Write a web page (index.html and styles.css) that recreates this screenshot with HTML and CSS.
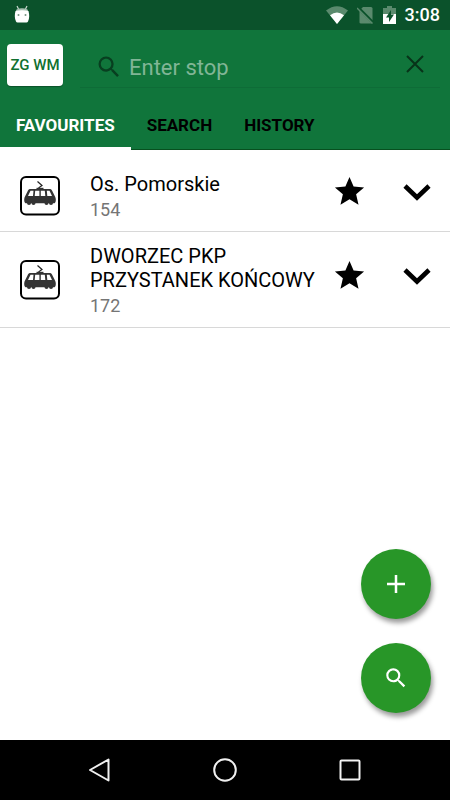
FILE: index.html
```html
<!DOCTYPE html>
<html lang="en">
<head>
    <meta charset="UTF-8">
    <meta name="viewport" content="width=device-width, initial-scale=1.0">
    <title>Stops</title>
    <link rel="stylesheet" href="styles.css">
</head>
<body>
    <!-- Shared icons -->
    <svg class="defs" width="0" height="0" aria-hidden="true">
        <symbol id="icon-search" viewBox="0 0 24 24">
            <path d="M15.5 14h-.79l-.28-.27A6.47 6.47 0 0 0 16 9.5 6.5 6.5 0 1 0 9.5 16c1.61 0 3.09-.59 4.23-1.57l.27.28v.79l5 4.99L20.49 19l-4.99-5zm-6 0C7.01 14 5 11.99 5 9.5S7.01 5 9.5 5 14 7.01 14 9.5 11.99 14 9.5 14z"/>
        </symbol>
        <symbol id="icon-star" viewBox="0 0 24 24">
            <path d="M12 17.27L18.18 21l-1.64-7.03L22 9.24l-7.19-.61L12 2 9.19 8.63 2 9.24l5.46 4.73L5.82 21z"/>
        </symbol>
        <symbol id="icon-chevron" viewBox="0 0 28 22">
            <path d="M2 6L14 17.5L26 6" fill="none" stroke="currentColor" stroke-width="4.6"/>
        </symbol>
        <symbol id="icon-tram" viewBox="0 0 40 40">
            <rect x="1" y="1" width="38" height="37.5" rx="5" fill="#fff" stroke="#000" stroke-width="2"/>
            <path d="M17.5 5.5L22 9.5L18.5 12" fill="none" stroke="#222" stroke-width="1.2"/>
            <path d="M16.5 11.8h7v1.2h-7z" fill="#333"/>
            <path d="M10.5 13h19c1.3 0 2 .5 2.5 1.5l3 6c.5 1 .8 2 .8 3.500 0 2.500-.8 3.300-2.300 3.300H6.500c-1.500 0-2.300-.8-2.300-3.300 0-1.500.3-2.500.8-3.500l3-6c.5-1 1.200-1.500 2.500-1.500z" fill="#333"/>
            <g fill="#333">
                <circle cx="9" cy="27" r="2"/>
                <circle cx="13.5" cy="27" r="2"/>
                <circle cx="26.5" cy="27" r="2"/>
                <circle cx="31" cy="27" r="2"/>
            </g>
            <path d="M10.500 14.800h3l-.5 5.200H8zM15.200 14.800h4.200v5.200h-4.700zM20.800 14.800h4l.5 5.200h-4.500zM26.800 14.800h2.700l2.500 5.200h-4.700z" fill="#fff"/>
        </symbol>
    </svg>

    <div class="status-bar">
        <svg class="debug-icon" width="16" height="18" viewBox="0 0 16 18">
            <path d="M3 1l1.500 3M13 1l-1.500 3" stroke="#c9d8cf" stroke-width="1.2"/>
            <path d="M2.500 4.500Q8 2 13.500 4.500L14 6H2z" fill="#a9c2b3"/>
            <path d="M1.500 6q6.500-1.500 13 0c1 4 1 7-.5 10.500-.3.6-.8 1-1.500 1h-9c-.7 0-1.200-.4-1.500-1C.5 13 .5 10 1.500 6z" fill="#fff"/>
            <circle cx="4.5" cy="10" r="1" fill="#779583"/>
            <circle cx="11.5" cy="10" r="1" fill="#779583"/>
        </svg>
        <div class="status-icons">
            <svg width="22" height="18" viewBox="0 0 22 18">
                <path d="M0 4.500Q11-4 22 4.500L11 18z" fill="#5a8a6d"/>
                <path d="M4 9.200Q11 4 18 9.200L11 18z" fill="#fff"/>
            </svg>
            <svg width="17" height="18" viewBox="0 0 17 18">
                <path d="M6 1h8q1.500 0 1.500 1.500v14q0 1-1.500 1H4q-1.500 0-1.500-1V4.500z" fill="#5a8a6d"/>
                <path d="M0 .5L16.500 17" stroke="#0b522b" stroke-width="3"/>
                <path d="M0 2L15.500 17.500" stroke="#5a8a6d" stroke-width="1.5"/>
            </svg>
            <svg width="13" height="18" viewBox="0 0 13 18">
                <path d="M4 0h5v2h4v6H0V2h4z" fill="#5a8a6d"/>
                <path d="M0 8h13v10H0z" fill="#fff"/>
                <path d="M8 4L3 11.500h3V16l5-7.500H8z" fill="#0b522b"/>
            </svg>
            <span class="clock">3:08</span>
        </div>
    </div>

    <header class="header">
        <form class="toolbar">
            <button type="button" class="city-btn">ZG WM</button>
            <div class="search-box">
                <svg class="search-icon" width="28" height="28"><use href="#icon-search"/></svg>
                <input type="text" id="stop" name="stop" placeholder="Enter stop" aria-label="Enter stop">
                <button type="button" class="clear-btn" aria-label="Clear">
                    <svg width="18" height="18" viewBox="0 0 18 18">
                        <path d="M1 1l16 16M17 1L1 17" stroke="currentColor" stroke-width="2"/>
                    </svg>
                </button>
            </div>
        </form>
        <nav class="tabs">
            <a href="#favourites" class="tab active">FAVOURITES</a>
            <a href="#search" class="tab">SEARCH</a>
            <a href="#history" class="tab">HISTORY</a>
        </nav>
    </header>

    <main class="content">
        <ul class="stops">
            <li class="stop">
                <svg class="stop-icon" width="40" height="40"><use href="#icon-tram"/></svg>
                <div class="stop-info">
                    <div class="stop-name">Os. Pomorskie</div>
                    <div class="stop-number">154</div>
                </div>
                <div class="stop-actions">
                    <button type="button" aria-label="Favourite"><svg width="35" height="35"><use href="#icon-star"/></svg></button>
                    <button type="button" aria-label="Expand"><svg width="28" height="22"><use href="#icon-chevron"/></svg></button>
                </div>
            </li>
            <li class="stop">
                <svg class="stop-icon" width="40" height="40"><use href="#icon-tram"/></svg>
                <div class="stop-info">
                    <div class="stop-name">DWORZEC PKP PRZYSTANEK KOŃCOWY</div>
                    <div class="stop-number">172</div>
                </div>
                <div class="stop-actions">
                    <button type="button" aria-label="Favourite"><svg width="35" height="35"><use href="#icon-star"/></svg></button>
                    <button type="button" aria-label="Expand"><svg width="28" height="22"><use href="#icon-chevron"/></svg></button>
                </div>
            </li>
        </ul>
        <div class="fabs">
            <button type="button" class="fab" aria-label="Add">
                <svg width="18" height="18" viewBox="0 0 18 18">
                    <path d="M9 0v18M0 9h18" stroke="currentColor" stroke-width="2.5"/>
                </svg>
            </button>
            <button type="button" class="fab" aria-label="Search">
                <svg width="26" height="26"><use href="#icon-search"/></svg>
            </button>
        </div>
    </main>

    <footer class="nav-bar">
        <button type="button" aria-label="Back">
            <svg width="24" height="24" viewBox="0 0 24 24">
                <path d="M20.500 1.500v21L2 12z" stroke-linejoin="round"/>
            </svg>
        </button>
        <button type="button" aria-label="Home">
            <svg width="24" height="24" viewBox="0 0 24 24">
                <circle cx="12" cy="12" r="10.8"/>
            </svg>
        </button>
        <button type="button" aria-label="Recent apps">
            <svg width="24" height="24" viewBox="0 0 24 24">
                <rect x="2.5" y="2.5" width="19" height="19" rx="1"/>
            </svg>
        </button>
    </footer>
</body>
</html>
```
FILE: styles.css
```css
* {
    box-sizing: border-box;
}
body {
    margin: 0;
    min-height: 100vh;
    display: flex;
    flex-direction: column;
    font-family: Roboto, sans-serif;
    background-color: #fff;
    color: #000;
}
button {
    display: flex;
    align-items: center;
    justify-content: center;
    padding: 0;
    border: none;
    background: none;
    color: inherit;
    font-family: inherit;
    cursor: pointer;
}
svg {
    display: block;
    fill: currentColor;
}
.defs {
    position: absolute;
}

/* Status bar */
.status-bar {
    display: flex;
    align-items: center;
    justify-content: space-between;
    height: 30px;
    padding: 0 10px 0 14px;
    background-color: #0b522b;
    color: #fff;
}
.debug-icon {
    margin-bottom: 2px;
}
.status-icons {
    display: flex;
    align-items: center;
    gap: 9px;
}
.clock {
    font-size: 18px;
    font-weight: 500;
    line-height: 30px;
}

/* Header */
.header {
    background-color: #10753b;
    box-shadow: inset 0 -1px 0 #07501f;
}
.toolbar {
    display: flex;
    align-items: flex-start;
    gap: 17px;
    padding: 14px 10px 14px 7px;
}
.city-btn {
    flex: none;
    width: 56px;
    height: 42px;
    border-radius: 4px;
    background-color: #fff;
    color: #10702f;
    font-size: 15px;
    font-weight: 500;
    white-space: nowrap;
    box-shadow: 0 1px 1px rgba(0, 0, 0, 0.3);
}
.search-box {
    flex: 1;
    min-width: 0;
    display: flex;
    align-items: center;
    height: 44px;
    padding: 2px 16px 0 15px;
    border-bottom: 1px solid #0e6c37;
}
.search-icon {
    flex: none;
    color: #083f20;
}
.search-box input {
    flex: 1;
    min-width: 0;
    height: 40px;
    padding: 2px 0 0 6px;
    border: none;
    outline: none;
    background: none;
    color: #fff;
    font-family: inherit;
    font-size: 22px;
}
.search-box input::placeholder {
    color: #81b596;
}
.clear-btn {
    margin-bottom: 6px;
    color: #083319;
}
.tabs {
    display: flex;
}
.tab {
    height: 48px;
    padding: 0 16px;
    color: #000;
    font-size: 17px;
    font-weight: 700;
    line-height: 46px;
    text-decoration: none;
}
.tab.active {
    color: #fff;
    border-bottom: 3px solid #fff;
}

/* Stop list */
.content {
    position: relative;
    flex: 1;
}
.stops {
    margin: 0;
    padding: 10px 0 0;
    list-style: none;
}
.stop {
    display: flex;
    align-items: center;
    padding: 12px 19px 7px 20px;
    border-bottom: 1px solid #d8d8d8;
}
.stop-icon {
    flex: none;
    margin: 0 30px 4px 0;
}
.stop-info {
    flex: 1;
}
.stop-name {
    font-size: 20px;
    line-height: 24px;
}
.stop-number {
    color: #757575;
    font-size: 18px;
    line-height: 28px;
}
.stop-actions {
    display: flex;
    align-items: center;
    gap: 36px;
    margin-left: 10px;
    padding-bottom: 14px;
}

/* Floating buttons */
.fabs {
    position: absolute;
    right: 19px;
    bottom: 27px;
    display: flex;
    flex-direction: column;
    gap: 24px;
}
.fab {
    width: 70px;
    height: 70px;
    border-radius: 50%;
    background-color: #289628;
    color: #fff;
    box-shadow: 2px 4px 5px rgba(0, 0, 0, 0.4);
}

/* Navigation bar */
.nav-bar {
    display: flex;
    align-items: center;
    justify-content: center;
    gap: 101px;
    height: 60px;
    background-color: #000;
}
.nav-bar svg {
    fill: none;
    stroke: #f0f0f0;
    stroke-width: 2;
}
```
